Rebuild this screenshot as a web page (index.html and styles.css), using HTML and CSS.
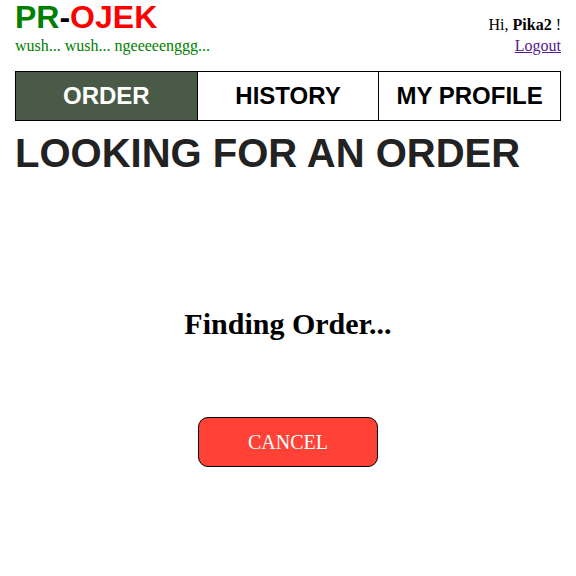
FILE: index.html
```html
<!DOCTYPE html>
<html lang="en">
<head>
<meta charset="utf-8">
<meta name="viewport" content="width=device-width, initial-scale=1">
<title>PR-OJEK</title>
<link rel="stylesheet" href="styles.css">
</head>
<body>
<header class="header">
  <div class="brand">
    <div class="logo"><span class="logo-green">PR</span>-<span class="logo-red">OJEK</span></div>
    <div class="tagline">wush... wush... ngeeeeenggg...</div>
  </div>
  <div class="account">
    <div>Hi, <b>Pika2</b> !</div>
    <a class="logout" href="#logout">Logout</a>
  </div>
</header>
<nav class="tabs">
  <a class="tab tab-active" href="#order">ORDER</a>
  <a class="tab" href="#history">HISTORY</a>
  <a class="tab" href="#profile">MY PROFILE</a>
</nav>
<main class="main">
  <h1 class="title">LOOKING FOR AN ORDER</h1>
  <h2 class="status">Finding Order...</h2>
  <button class="cancel" type="button">CANCEL</button>
</main>
</body>
</html>
```
FILE: styles.css
```css
* {
  box-sizing: border-box;
}

body {
  margin: 0 15px;
  background: #fff;
  color: #000;
  font-family: "Liberation Serif", "Times New Roman", serif;
  font-size: 16px;
}

.header {
  display: flex;
  justify-content: space-between;
  align-items: flex-end;
  padding-bottom: 15px;
}

.logo {
  font: bold 32px/35px "Liberation Sans", Arial, sans-serif;
}

.logo-green,
.tagline {
  color: green;
}

.logo-red {
  color: red;
}

.tagline,
.account {
  line-height: 21px;
}

.account {
  text-align: right;
}

.logout {
  color: #551a8b;
}

.tabs {
  display: grid;
  grid-template-columns: repeat(3, 1fr);
  border: 1px solid #000;
  border-right: 0;
}

.tab {
  border-right: 1px solid #000;
  font: bold 24px/48px "Liberation Sans", Arial, sans-serif;
  text-align: center;
  text-decoration: none;
  color: #000;
}

.tab-active {
  background: #495a47;
  color: #fff;
}

.main {
  display: flex;
  flex-direction: column;
  align-items: center;
}

.title {
  align-self: flex-start;
  margin: 8px 0 0;
  font: bold 40px/48px "Liberation Sans", Arial, sans-serif;
  color: #222;
}

.status {
  margin: 129px 0 0;
  font-size: 30px;
  line-height: 36px;
}

.cancel {
  width: 180px;
  height: 50px;
  margin-top: 75px;
  border: 1px solid #000;
  border-radius: 10px;
  background: #ff4136;
  color: #fff;
  font-family: inherit;
  font-size: 20px;
}
```
